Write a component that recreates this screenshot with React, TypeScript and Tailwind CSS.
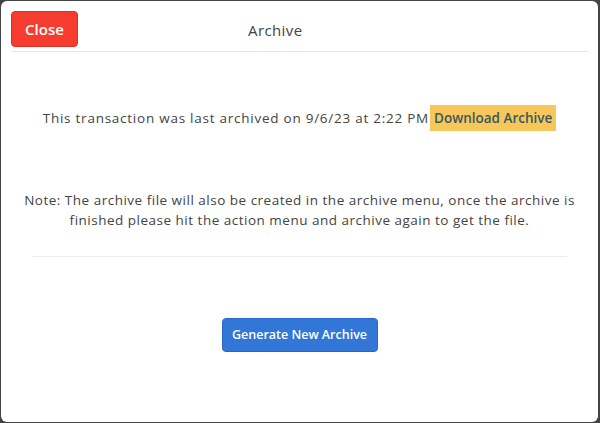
import React from 'react';

const font = { fontFamily: '"Open Sans", "Noto Sans", sans-serif' };

export default function App() {
  return (
    <div className="w-[600px] h-[423px] bg-[#444444] pl-px pt-px pr-[2px] pb-px" style={font}>
      <div className="h-full bg-white rounded-[6px] flex flex-col">
        {/* header */}
        <div className="mx-[10px] h-[51px] border-b border-[#e6e6e6] flex items-start pt-[10px]">
          <button className="h-[36px] w-[67px] bg-[#f63b2f] rounded-[4px] text-white font-semibold text-[15px] border border-[#d8322a]">
            Close
          </button>
          <div className="ml-[170px] mt-[8px] text-[15px] text-[#444] tracking-[0.4px]">Archive</div>
        </div>

        {/* body */}
        <div className="flex flex-col items-center pt-[53px]">
          <p className="text-[13.5px] text-[#444] tracking-[0.75px] flex items-center">
            <span className="mr-px">This transaction was last archived on 9/6/23 at 2:22 PM</span>
            <span className="bg-[#f8c75c] text-[#3b585c] font-semibold px-[4px] h-[26px] flex items-center tracking-[0px]">
              Download Archive
            </span>
          </p>
          <p className="mt-[59px] px-[20px] text-center text-[13.5px] leading-[20px] text-[#444] tracking-[0.5px]">
            Note: The archive file will also be created in the archive menu, once the archive is finished please hit
            the action menu and archive again to get the file.
          </p>
        </div>
        <div className="mx-[31px] mt-[26px] border-t border-[#ececec]"></div>
        <div className="flex justify-center pt-[61px]">
          <button className="h-[34px] w-[156px] bg-[#3276d7] rounded-[4px] text-white font-semibold text-[12.5px] border border-[#2a66c4]">
            Generate New Archive
          </button>
        </div>
      </div>
    </div>
  );
}
